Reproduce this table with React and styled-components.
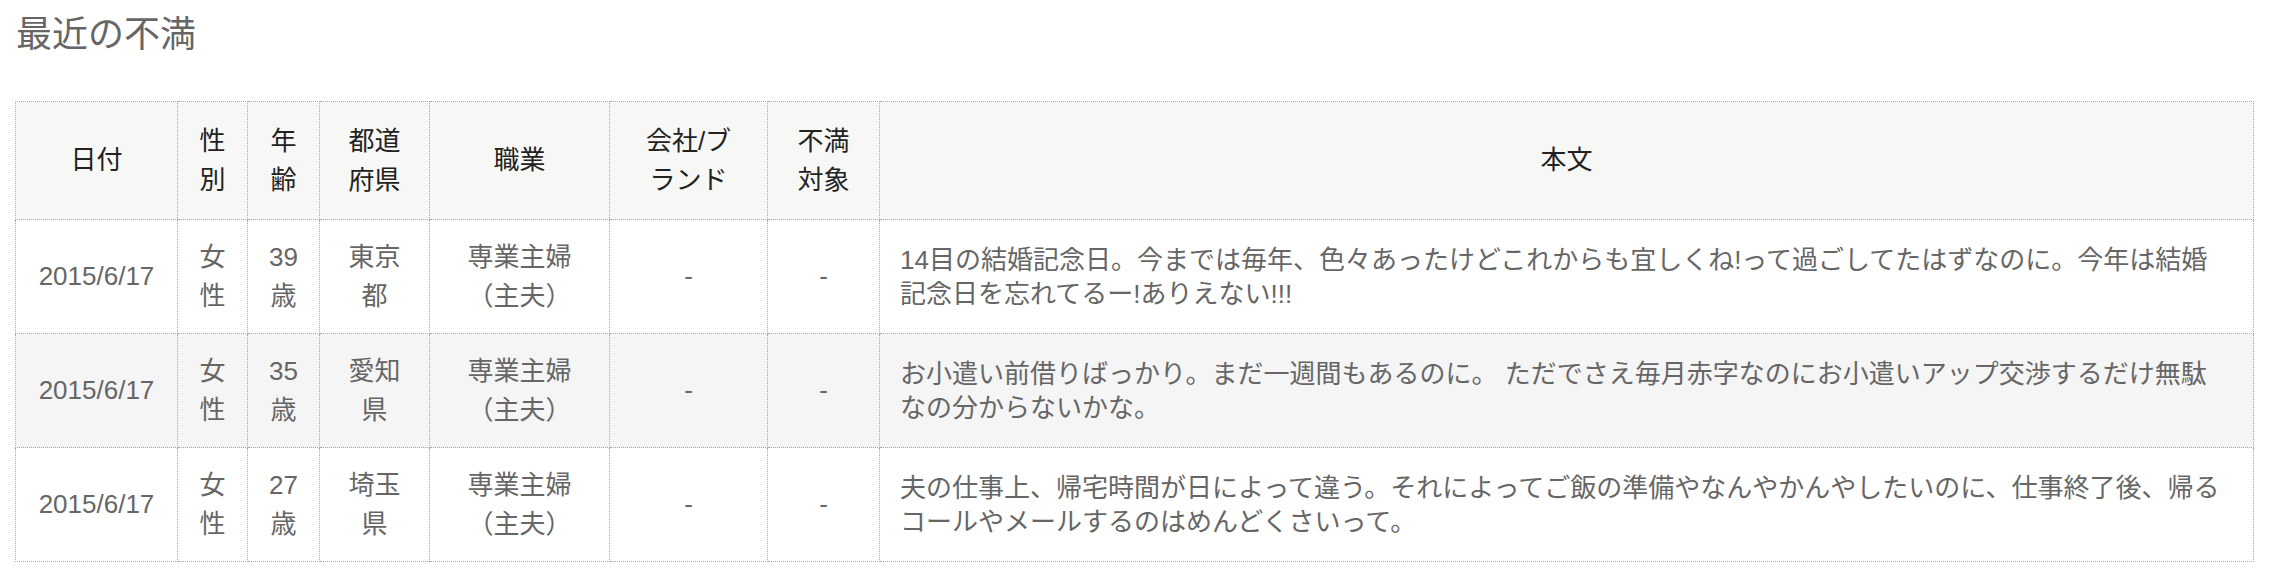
import React from 'react';
import styled, { createGlobalStyle } from 'styled-components';

const GlobalStyle = createGlobalStyle`
  body {
    margin: 0;
    background: #ffffff;
    font-family: 'Liberation Sans', 'Noto Sans CJK JP', sans-serif;
  }
`;

const Page = styled.main`
  padding: 17px 0 0 15px;
`;

const Title = styled.h2`
  margin: 0 0 48px 1px;
  font-size: 36px;
  line-height: 36px;
  font-weight: normal;
  color: #666666;
`;

const Table = styled.table`
  width: 2239px;
  table-layout: fixed;
  border-collapse: collapse;
  font-size: 26px;
  line-height: 39px;
`;

const HeadRow = styled.tr`
  height: 118px;
  background: #f7f8f6;
`;

const Row = styled.tr`
  height: 114px;
  background: ${({ $striped }) => ($striped ? '#f5f5f5' : '#ffffff')};
`;

const Th = styled.th`
  padding: 0 20px;
  border: 1px dotted #a8a8a8;
  font-weight: normal;
  color: #222222;
  text-align: center;
  vertical-align: middle;
`;

const Td = styled.td`
  padding: 0 20px;
  border: 1px dotted #a8a8a8;
  color: #666666;
  text-align: ${({ $wide }) => ($wide ? 'left' : 'center')};
  line-height: ${({ $wide }) => ($wide ? '34px' : '39px')};
  white-space: ${({ $wide }) => ($wide ? 'nowrap' : 'normal')};
  vertical-align: middle;
`;

const columns = [162, 70, 72, 110, 180, 158, 112, null];

const rows = [
  {
    date: '2015/6/17',
    sex: '女性',
    age: '39歳',
    pref: '東京都',
    job: '専業主婦（主夫）',
    text: [
      '14目の結婚記念日。今までは毎年、色々あったけどこれからも宜しくね!って過ごしてたはずなのに。今年は結婚',
      '記念日を忘れてるー!ありえない!!!',
    ],
  },
  {
    date: '2015/6/17',
    sex: '女性',
    age: '35歳',
    pref: '愛知県',
    job: '専業主婦（主夫）',
    text: [
      'お小遣い前借りばっかり。まだ一週間もあるのに。 ただでさえ毎月赤字なのにお小遣いアップ交渉するだけ無駄',
      'なの分からないかな。',
    ],
  },
  {
    date: '2015/6/17',
    sex: '女性',
    age: '27歳',
    pref: '埼玉県',
    job: '専業主婦（主夫）',
    text: [
      '夫の仕事上、帰宅時間が日によって違う。それによってご飯の準備やなんやかんやしたいのに、仕事終了後、帰る',
      'コールやメールするのはめんどくさいって。',
    ],
  },
];

const App = () => {
  return (
    <Page>
      <GlobalStyle />
      <Title>最近の不満</Title>
      <Table>
        <colgroup>
          {columns.map((w, i) => (
            <col key={i} style={w ? { width: w } : undefined} />
          ))}
        </colgroup>
        <thead>
          <HeadRow>
            <Th>日付</Th>
            <Th>性別</Th>
            <Th>年齢</Th>
            <Th>都道府県</Th>
            <Th>職業</Th>
            <Th>
              会社/ブ
              <br />
              ランド
            </Th>
            <Th>不満対象</Th>
            <Th>本文</Th>
          </HeadRow>
        </thead>
        <tbody>
          {rows.map((r, i) => (
            <Row key={i} $striped={i % 2 === 1}>
              <Td>{r.date}</Td>
              <Td>{r.sex}</Td>
              <Td>{r.age}</Td>
              <Td>{r.pref}</Td>
              <Td>{r.job}</Td>
              <Td>-</Td>
              <Td>-</Td>
              <Td $wide>
                {r.text[0]}
                <br />
                {r.text[1]}
              </Td>
            </Row>
          ))}
        </tbody>
      </Table>
    </Page>
  );
};

export default App;
